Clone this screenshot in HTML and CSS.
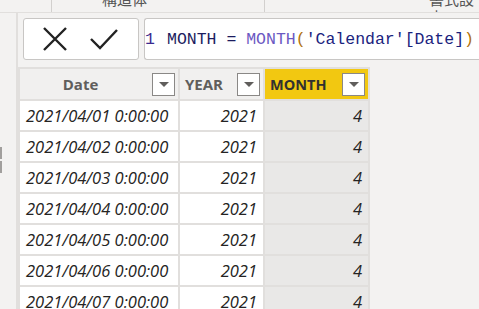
FILE: index.html
```html
<!DOCTYPE html>
<html lang="ja">
<head>
    <meta charset="UTF-8">
    <title>MONTH</title>
    <link rel="stylesheet" href="styles.css">
</head>
<body>
    <div class="ribbon">
        <div class="ribbon-cell left"></div>
        <div class="ribbon-cell mid"><span class="ribbon-label">構造体</span></div>
        <div class="ribbon-cell right"><span class="ribbon-label">書式設定</span></div>
    </div>
    <div class="main">
        <div class="side"><span class="grip"></span><span class="grip"></span></div>
        <div class="content">
            <div class="formula-bar">
                <div class="actions">
                    <svg width="26" height="26" viewBox="0 0 26 26"><path d="M2 2 L24 24 M24 2 L2 24" stroke="#222" stroke-width="2.4" fill="none"/></svg>
                    <svg width="28" height="22" viewBox="0 0 28 22"><path d="M1 11 L10 20 L27 2" stroke="#222" stroke-width="2.4" fill="none"/></svg>
                </div>
                <div class="formula">
                    <span class="ln">1</span>
                    <span class="code">MONTH = <span class="fn">MONTH</span><span class="paren">(</span><span class="ref">'Calendar'[Date]</span><span class="paren">)</span></span>
                </div>
            </div>
            <table class="grid">
                <thead>
                    <tr>
                        <th class="c-date"><div class="th-in center"><span>Date</span><span class="dd"></span></div></th>
                        <th class="c-year"><div class="th-in"><span>YEAR</span><span class="dd"></span></div></th>
                        <th class="c-month sel"><div class="th-in"><span>MONTH</span><span class="dd"></span></div></th>
                    </tr>
                </thead>
                <tbody id="rows"></tbody>
            </table>
        </div>
    </div>

    <script>
        const rows = document.getElementById('rows');
        for (let d = 1; d <= 7; d++) {
            const tr = document.createElement('tr');
            tr.innerHTML = `
                <td class="c-date">2021/04/0${d} 0:00:00</td>
                <td class="c-year num">2021</td>
                <td class="c-month num sel">4</td>
            `;
            rows.appendChild(tr);
        }
    </script>
</body>
</html>
```

FILE: styles.css
```css
body {
    margin: 0;
    background-color: #f3f2f1;
    font-family: "Open Sans", "Noto Sans", sans-serif;
    overflow: hidden;
    width: 479px;
    height: 309px;
}
.ribbon {
    display: flex;
    height: 12px;
    border-bottom: 1px solid #e1dfdd;
    background-color: #f3f2f1;
    overflow: hidden;
}
.ribbon-cell {
    position: relative;
    height: 12px;
    border-right: 1px solid #d2d0ce;
    overflow: hidden;
}
.ribbon-cell.left { width: 51px; }
.ribbon-cell.mid { width: 212px; }
.ribbon-cell.right { flex: 1; border-right: none; }
.ribbon-label {
    position: absolute;
    top: -10px;
    font-family: "Noto Sans CJK JP", sans-serif;
    font-size: 15px;
    color: #555;
    line-height: 18px;
}
.mid .ribbon-label { left: 50px; }
.right .ribbon-label { left: 164px; }
.main {
    display: flex;
    height: 296px;
}
.side {
    width: 16px;
    border-right: 2px solid #e1dfdd;
    display: flex;
    flex-direction: column;
    padding-top: 134px;
    gap: 2px;
}
.grip {
    display: block;
    width: 2px;
    height: 12px;
    background-color: #a19f9d;
}
.content {
    flex: 1;
}
.formula-bar {
    display: flex;
    gap: 5px;
    padding: 5px 0 0 5px;
    height: 42px;
}
.actions {
    width: 111px;
    height: 40px;
    background-color: #fff;
    border: 1px solid #c8c6c4;
    border-radius: 3px;
    display: flex;
    align-items: center;
    justify-content: center;
    gap: 22px;
    padding-right: 3px;
}
.formula {
    flex: 1;
    height: 40px;
    background-color: #fff;
    border: 1px solid #c8c6c4;
    border-right: none;
    border-radius: 3px 0 0 3px;
    display: flex;
    align-items: center;
    font-family: "Liberation Mono", "DejaVu Sans Mono", monospace;
    font-size: 16.5px;
    white-space: nowrap;
    overflow: hidden;
}
.ln {
    color: #3b2a8f;
    padding-left: 0;
    width: 22px;
}
.code { color: #1b1b5e; }
.fn { color: #6b58c2; }
.paren { color: #b0720a; }
.ref { color: #1a237e; }
.grid {
    border-collapse: collapse;
    margin-top: 7px;
    table-layout: fixed;
    width: 352px;
}
.grid th, .grid td {
    border: 2px solid #e1dfdd;
    padding: 0;
}
.grid th {
    height: 30px;
    background-color: #f1f0ef;
    color: #605e5c;
    font-size: 15px;
    font-weight: 700;
}
.grid th.sel {
    background-color: #f2c811;
    color: #323130;
}
.th-in {
    display: flex;
    align-items: center;
    justify-content: space-between;
    padding: 0 3px 0 5px;
}
.th-in.center span:first-child {
    flex: 1;
    text-align: center;
    padding-right: 16px;
}
.c-month .th-in span:first-child { font-size: 14.5px; }
.dd {
    position: relative;
    width: 21px;
    height: 21px;
    background-color: #fff;
    border: 1px solid #8a8886;
}
.dd::after {
    content: "";
    position: absolute;
    left: 6px;
    top: 8px;
    border-left: 5px solid transparent;
    border-right: 5px solid transparent;
    border-top: 5px solid #605e5c;
}
.c-date { width: 158px; }
.c-year { width: 83px; }
.c-month { width: 103px; }
.grid td {
    height: 29px;
    background-color: #fff;
    color: #252423;
    font-size: 16.5px;
    font-style: italic;
    padding: 0 6px;
    white-space: nowrap;
    overflow: hidden;
}
.grid td.num { text-align: right; }
.grid td.sel { background-color: #e9e8e7; }
```
